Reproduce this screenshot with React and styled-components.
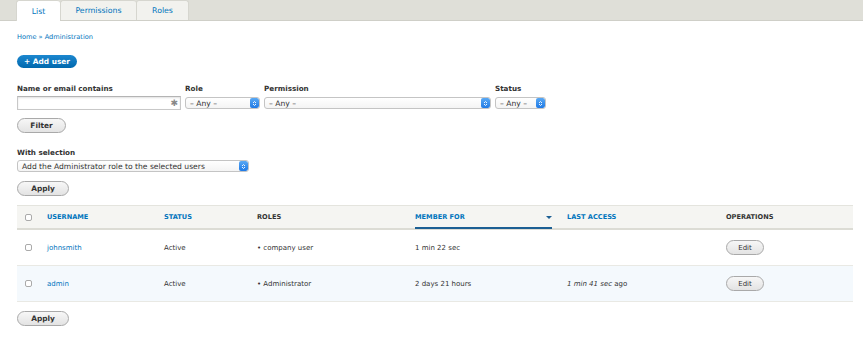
import React from 'react';
import styled, { createGlobalStyle } from 'styled-components';

const GlobalStyle = createGlobalStyle`
  html, body {
    margin: 0;
    padding: 0;
    background: #fff;
    font-family: "DejaVu Sans", Verdana, sans-serif;
    color: #333;
  }
  * { box-sizing: border-box; }
`;

const blue = '#0074bd';

const TabBar = styled.div`
  height: 21px;
  background: #dfdfd8;
  border-bottom: 1px solid #cfcfc8;
  display: flex;
  align-items: flex-end;
  padding-left: 16px;
`;

const Tab = styled.div`
  height: ${({ active }) => (active ? '21px' : '20px')};
  display: flex;
  align-items: center;
  justify-content: center;
  width: ${({ w }) => w}px;
  background: ${({ active }) => (active ? '#fff' : '#f2f2ee')};
  border: 1px solid #d6d6cf;
  border-bottom: none;
  border-right: ${({ last }) => (last ? '1px solid #d6d6cf' : 'none')};
  border-radius: 3px 3px 0 0;
  color: ${blue};
  font-size: 7.8px;
  margin-bottom: ${({ active }) => (active ? '-1px' : '0')};
`;

const Page = styled.div`
  padding: 0 10px 0 17px;
`;

const Breadcrumb = styled.div`
  padding-top: 12px;
  height: 34px;
  font-size: 6.6px;
  color: ${blue};
`;

const PrimaryButton = styled.div`
  display: flex;
  align-items: center;
  justify-content: center;
  width: 60px;
  height: 13px;
  border-radius: 10px;
  background: linear-gradient(#1c87cf, #0068ad);
  color: #fff;
  font-weight: bold;
  font-size: 7.4px;
`;

const FilterRow = styled.div`
  display: flex;
  gap: 4px;
  margin-top: 16px;
`;

const Field = styled.div`
  display: flex;
  flex-direction: column;
  gap: 2px;
`;

const Label = styled.div`
  font-size: 7.2px;
  font-weight: bold;
  color: #333;
  height: 10px;
  line-height: 10px;
`;

const TextInput = styled.div`
  width: ${({ w }) => w}px;
  height: 14px;
  border: 1px solid #c8c8c8;
  border-top-color: #b4b4b4;
  box-shadow: inset 0 1px 2px rgba(0, 0, 0, 0.12);
  display: flex;
  align-items: center;
  justify-content: flex-end;
  padding-right: 2px;
  color: #888;
  font-size: 9px;
`;

const SelectBox = styled.div`
  width: ${({ w }) => w}px;
  height: 12px;
  margin-top: ${({ mt }) => mt || 1}px;
  border: 1px solid #c4c4c4;
  border-radius: 3px;
  background: linear-gradient(#fff, #f4f4f4);
  display: flex;
  align-items: center;
  justify-content: space-between;
  font-size: 7.6px;
  color: #333;
  padding-left: 4px;
  overflow: hidden;
  white-space: nowrap;
`;

const Stepper = styled.div`
  flex: none;
  width: 9px;
  height: 10px;
  border-radius: 2px;
  background: linear-gradient(#5aa9f4, #1f7ae6);
  display: flex;
  align-items: center;
  justify-content: center;
`;

const GrayButton = styled.div`
  display: flex;
  align-items: center;
  justify-content: center;
  width: ${({ w }) => w}px;
  height: 15px;
  border: 1px solid #a9a9a9;
  border-radius: 10px;
  background: linear-gradient(#f7f7f7, #e3e3e3);
  font-weight: bold;
  font-size: 7.4px;
  color: #333;
`;

const Block = styled.div`
  margin-top: ${({ mt }) => mt}px;
`;

const Table = styled.div`
  margin-top: 9px;
  width: 836px;
`;

const Cols = styled.div`
  display: grid;
  grid-template-columns: 30px 117px 93px 158px 152px 159px 1fr;
  align-items: center;
`;

const HeadRow = styled(Cols)`
  height: 25px;
  background: #f5f5f2;
  border-top: 1px solid #e4e4de;
  border-bottom: 2px solid #dcdcd5;
`;

const Row = styled(Cols)`
  height: 36px;
  background: ${({ alt }) => (alt ? '#f4f9fd' : '#fff')};
  border-bottom: 1px solid #e9e9e4;
`;

const Th = styled.div`
  font-size: 6.6px;
  font-weight: bold;
  color: ${({ link }) => (link ? blue : '#333')};
  height: 100%;
  display: flex;
  align-items: center;
  justify-content: space-between;
  border-bottom: ${({ sorted }) => (sorted ? '2px solid #1c5f93' : 'none')};
  margin-bottom: ${({ sorted }) => (sorted ? '-2px' : '0')};
  margin-right: ${({ sorted }) => (sorted ? '15px' : '0')};
`;

const Td = styled.div`
  font-size: 7px;
  color: ${({ link }) => (link ? blue : '#333')};
`;

const Check = styled.div`
  width: 7px;
  height: 7px;
  margin-left: 8px;
  border: 1px solid #aaa;
  border-radius: 2px;
  background: #fff;
`;

const SortArrow = styled.span`
  width: 0;
  height: 0;
  border-left: 3px solid transparent;
  border-right: 3px solid transparent;
  border-top: 3px solid #1c5f93;
`;

const EditButton = styled(GrayButton)`
  width: 38px;
  font-weight: normal;
  font-size: 7px;
`;

const StepIcon = () => (
  <svg width="5" height="7" viewBox="0 0 5 7">
    <path d="M1 3 L2.5 1.5 L4 3 M1 4 L2.5 5.5 L4 4" stroke="#fff" strokeWidth="0.9" fill="none" />
  </svg>
);

const Select = ({ w, text, mt }) => (
  <SelectBox w={w} mt={mt}>
    <span>{text}</span>
    <Stepper>
      <StepIcon />
    </Stepper>
  </SelectBox>
);

const users = [
  { name: 'johnsmith', role: 'company user', member: '1 min 22 sec', access: null },
  { name: 'admin', role: 'Administrator', member: '2 days 21 hours', access: '1 min 41 sec' }
];

const App = () => (
  <>
    <GlobalStyle />
    <TabBar>
      <Tab active w={44}>List</Tab>
      <Tab w={76}>Permissions</Tab>
      <Tab w={53} last>Roles</Tab>
    </TabBar>
    <Page>
      <Breadcrumb>Home » Administration</Breadcrumb>
      <PrimaryButton>+ Add user</PrimaryButton>
      <FilterRow>
        <Field>
          <Label>Name or email contains</Label>
          <TextInput w={164}>✱</TextInput>
        </Field>
        <Field>
          <Label>Role</Label>
          <Select w={75} text="– Any –" />
        </Field>
        <Field>
          <Label>Permission</Label>
          <Select w={227} text="– Any –" />
        </Field>
        <Field>
          <Label>Status</Label>
          <Select w={51} text="– Any –" />
        </Field>
      </FilterRow>
      <Block mt={8}>
        <GrayButton w={49}>Filter</GrayButton>
      </Block>
      <Block mt={15}>
        <Label>With selection</Label>
        <Select w={232} mt={2} text="Add the Administrator role to the selected users" />
      </Block>
      <Block mt={9}>
        <GrayButton w={52}>Apply</GrayButton>
      </Block>
      <Table>
        <HeadRow>
          <Check />
          <Th link>USERNAME</Th>
          <Th link>STATUS</Th>
          <Th>ROLES</Th>
          <Th link sorted>
            MEMBER FOR
            <SortArrow />
          </Th>
          <Th link>LAST ACCESS</Th>
          <Th>OPERATIONS</Th>
        </HeadRow>
        {users.map((u, i) => (
          <Row key={u.name} alt={i % 2 === 1}>
            <Check />
            <Td link>{u.name}</Td>
            <Td>Active</Td>
            <Td>• {u.role}</Td>
            <Td>{u.member}</Td>
            <Td>
              {u.access && (
                <>
                  <em>{u.access}</em> ago
                </>
              )}
            </Td>
            <div>
              <EditButton>Edit</EditButton>
            </div>
          </Row>
        ))}
      </Table>
      <Block mt={9}>
        <GrayButton w={52}>Apply</GrayButton>
      </Block>
    </Page>
  </>
);

export default App;
